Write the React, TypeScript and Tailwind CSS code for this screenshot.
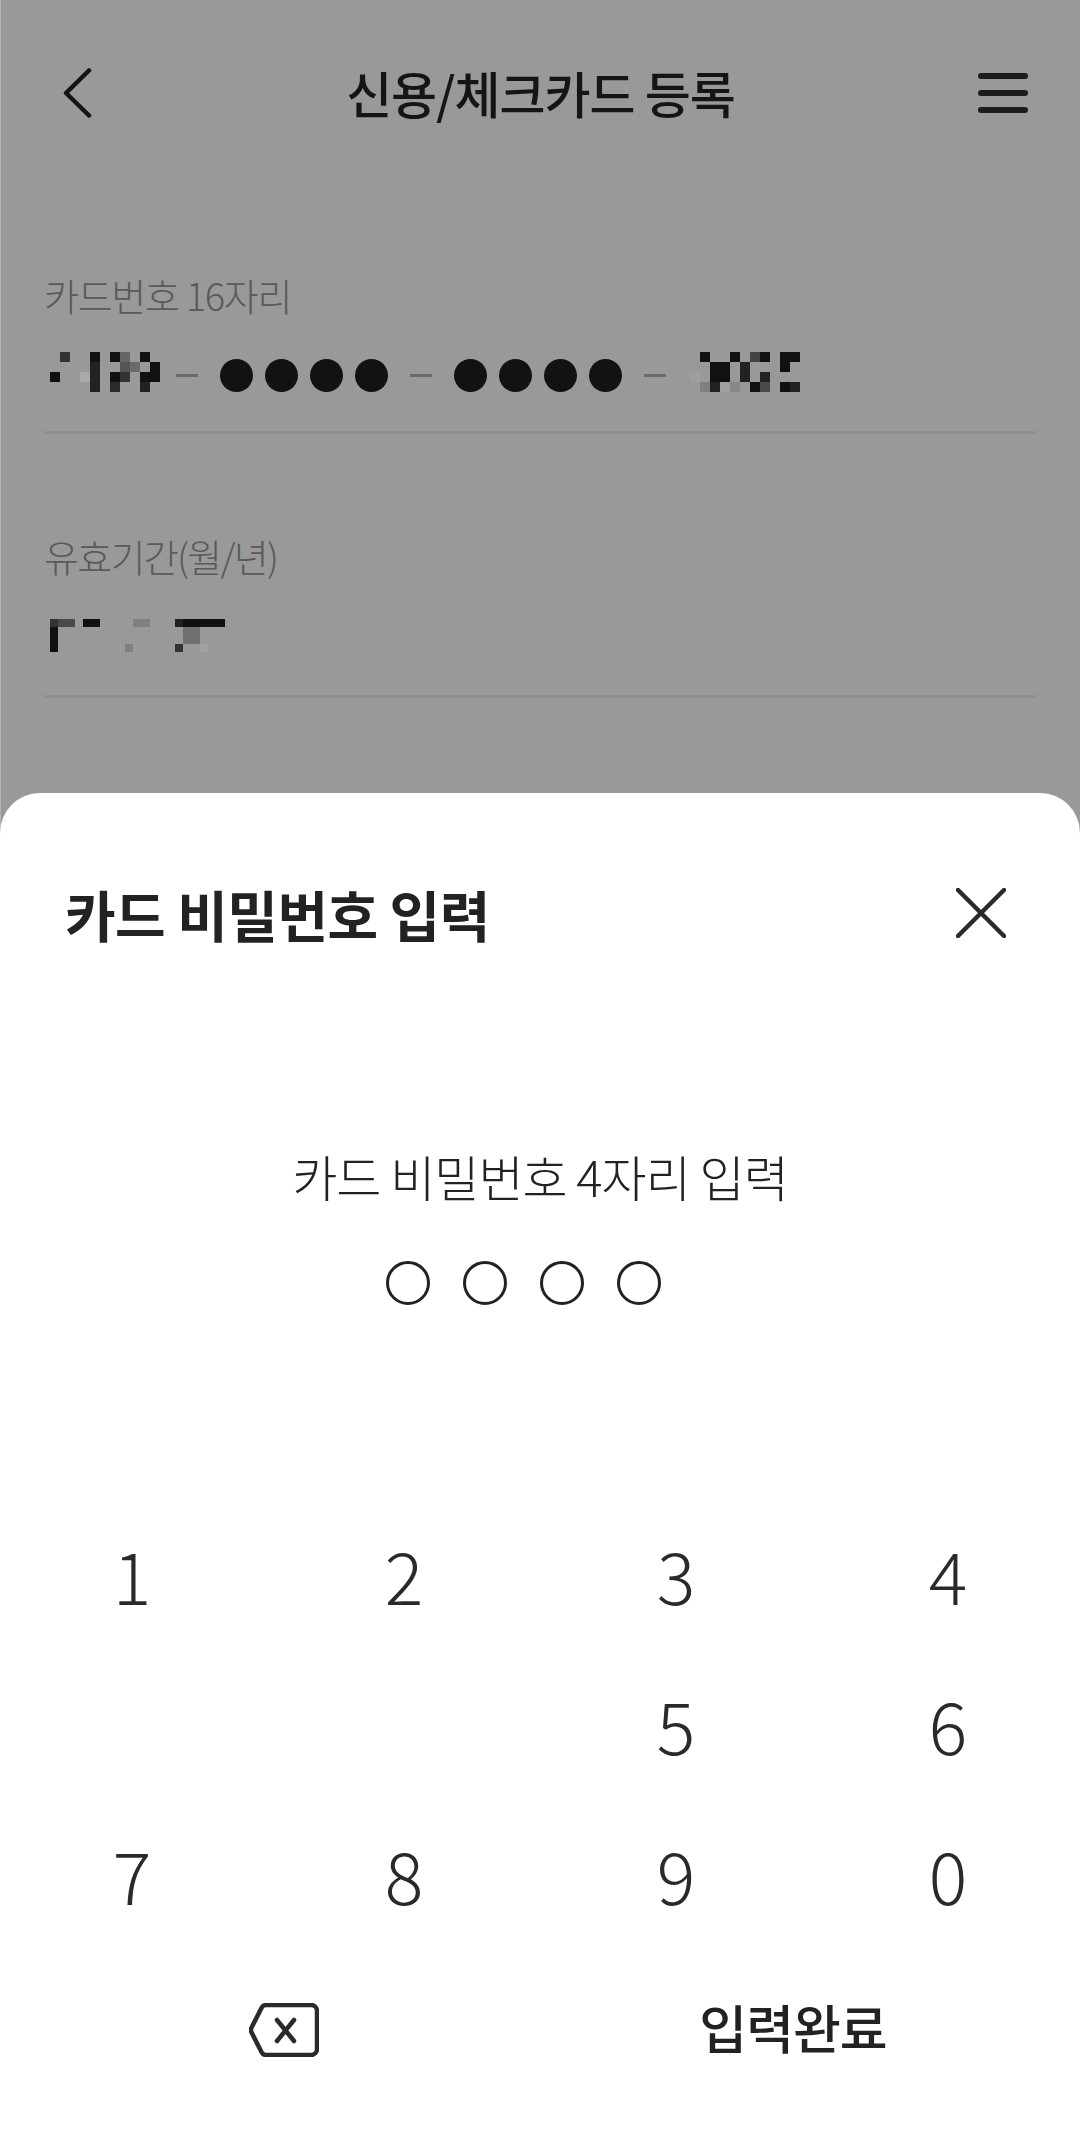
const font = "font-['Noto_Sans_CJK_KR','Noto_Sans',sans-serif]";

// censored digits from the screenshot, one colour per cell, '' is empty
const cardStart = [
  ['', '#333', '', '', '#111', '', '#111', '#666', '', '#111', ''],
  ['', '', '', '', '#222', '', '', '#555', '#6a6a6a', '', '#111'],
  ['#111', '', '', '#aaa', '#222', '', '#111', '#333', '', '#111', '#111'],
  ['', '', '', '', '#222', '', '#2a2a2a', '#999', '', '#222', ''],
];
const cardEnd = [
  ['', '#111', '', '', '#111', '', '#444', '#111', '', '#111', '#111'],
  ['', '', '#111', '#111', '', '#222', '', '', '', '#111', ''],
  ['#9e9e9e', '', '#111', '#111', '', '#222', '', '#222', '', '', ''],
  ['', '#808080', '#222', '#a0a0a0', '#888', '', '#111', '#4a4a4a', '#999', '#111', '#222'],
];
const expiry = [
  ['#333', '#4a4a4a', '#4a4a4a', '', '#111', '#111', '', '', '', '', '#808080', '#808080', '', '', '', '#222', '#111', '#111', '#111', '#111', '#111'],
  ['#111', '', '', '', '', '', '', '', '', '', '', '', '', '', '', '', '#707070', '#707070', '', '', ''],
  ['#111', '', '', '', '', '', '', '', '', '', '', '', '', '', '', '', '#707070', '#707070', '', '', ''],
  ['#111', '', '', '', '', '', '', '', '', '#808080', '', '', '', '', '', '#333', '', '', '#a0a0a0', '', ''],
];

function Mosaic({ rows, cell }: { rows: string[][]; cell: string }) {
  return (
    <div className="flex flex-col">
      {rows.map((row, r) => (
        <div key={r} className="flex">
          {row.map((c, i) => (
            <span key={i} className={cell} style={{ backgroundColor: c || 'transparent' }} />
          ))}
        </div>
      ))}
    </div>
  );
}

function Dots() {
  return (
    <div className="flex gap-3">
      {[0, 1, 2, 3].map((i) => (
        <span key={i} className="h-[33px] w-[33px] rounded-full bg-[#121212]" />
      ))}
    </div>
  );
}

const Dash = () => <span className="h-[3px] w-[22px] bg-[#6a6a6a]" />;

const keys = ['1', '2', '3', '4', '', '', '5', '6', '7', '8', '9', '0'];

export default function App() {
  return (
    <div className={`relative h-[2152px] w-[1080px] overflow-hidden bg-[#999999] ${font}`}>
      <span className="absolute left-0 top-0 h-[840px] w-px bg-[#b4b4b4]" />

      {/* Dimmed page behind the sheet */}
      <header className="grid h-[186px] grid-cols-[1fr_auto_1fr] items-center pb-[1px] pl-[53px] pr-[52px]">
        <svg viewBox="0 0 30 50" className="ml-[9px] h-[50px] w-[30px]" fill="none" stroke="#151515" strokeWidth="4.5" strokeLinecap="round" strokeLinejoin="round">
          <path d="M27 2.5 4 25l23 22.5" />
        </svg>
        <h1 className="text-[50px] font-medium tracking-[-1px] text-[#151515]">신용/체크카드 등록</h1>
        <div className="flex w-[50px] flex-col gap-[11px] justify-self-end">
          <span className="h-[6px] rounded-full bg-[#1c1c1c]" />
          <span className="h-[6px] rounded-full bg-[#1c1c1c]" />
          <span className="h-[6px] rounded-full bg-[#1c1c1c]" />
        </div>
      </header>

      <div className="px-[44px]">
        <div className="flex h-[248px] flex-col border-b-[3px] border-[#8e8e8e] pt-[85px]">
          <p className="text-[38px] font-light leading-[48px] tracking-[-1.3px] text-[#5a5a5a]">카드번호 16자리</p>
          <div className="mt-[33px] flex items-end pl-[6px]">
            <Mosaic rows={cardStart} cell="h-[10px] w-[10px]" />
            <div className="ml-[16px] flex h-[33px] items-center gap-[22px]">
              <Dash />
              <Dots />
              <Dash />
              <Dots />
              <Dash />
            </div>
            <div className="ml-[24px]">
              <Mosaic rows={cardEnd} cell="h-[10px] w-[10px]" />
            </div>
          </div>
        </div>
        <div className="flex h-[264px] flex-col border-b-[3px] border-[#8e8e8e] pt-[98px]">
          <p className="text-[38px] font-light leading-[48px] tracking-[-1.7px] text-[#5a5a5a]">유효기간(월/년)</p>
          <div className="mt-[39px] pl-[6px]">
            <Mosaic rows={expiry} cell="h-[8.33px] w-[8.33px]" />
          </div>
        </div>
      </div>

      {/* Bottom sheet */}
      <section className="absolute inset-x-0 bottom-0 h-[1359px] rounded-t-[40px] bg-white text-[#222222]">
        <div className="flex items-center justify-between pl-[65px] pr-[74px] pt-[85px]">
          <h2 className="text-[55px] font-bold leading-[70px] tracking-[-0.5px]">카드 비밀번호 입력</h2>
          <svg viewBox="0 0 50 50" className="h-[50px] w-[50px]" fill="none" stroke="#2a2a2a" strokeWidth="4.5" strokeLinecap="round">
            <path d="M2 2 48 48M48 2 2 48" />
          </svg>
        </div>

        <p className="mt-[196px] text-center text-[49px] font-light leading-[64px] tracking-[-1px]">카드 비밀번호 4자리 입력</p>
        <div className="mt-[53px] flex gap-[33px] pl-[386px]">
          {[0, 1, 2, 3].map((i) => (
            <span key={i} className="h-[44px] w-[44px] rounded-full border-[3px] border-[#222222]" />
          ))}
        </div>

        <div className="ml-[-4px] mt-[194px] grid grid-cols-[repeat(4,272px)]">
          {keys.map((k, i) => (
            <div key={i} className="flex h-[150px] items-center justify-center text-[72px] font-light leading-none text-[#2a2a2a]">
              {k}
            </div>
          ))}
        </div>

        <div className="mt-[5px] grid grid-cols-2">
          <div className="flex h-[150px] items-center justify-center pt-[1px]">
            <svg viewBox="0 0 70 54" className="ml-[28px] h-[54px] w-[70px]" fill="none" stroke="#2a2a2a" strokeWidth="4.5" strokeLinecap="round" strokeLinejoin="round">
              <path d="M17 2H62a6 6 0 0 1 6 6V46a6 6 0 0 1-6 6H17a5 5 0 0 1-4.4-2.7L2.6 29.5a5 5 0 0 1 0-5L12.6 4.7A5 5 0 0 1 17 2Z" />
              <path d="M28 17 45 38M45 17 28 38" />
            </svg>
          </div>
          <div className="flex h-[150px] items-center justify-center pb-[4px] text-[52px] font-medium tracking-[-1px]">
            <span className="mr-[34px]">입력완료</span>
          </div>
        </div>
      </section>
    </div>
  );
}
